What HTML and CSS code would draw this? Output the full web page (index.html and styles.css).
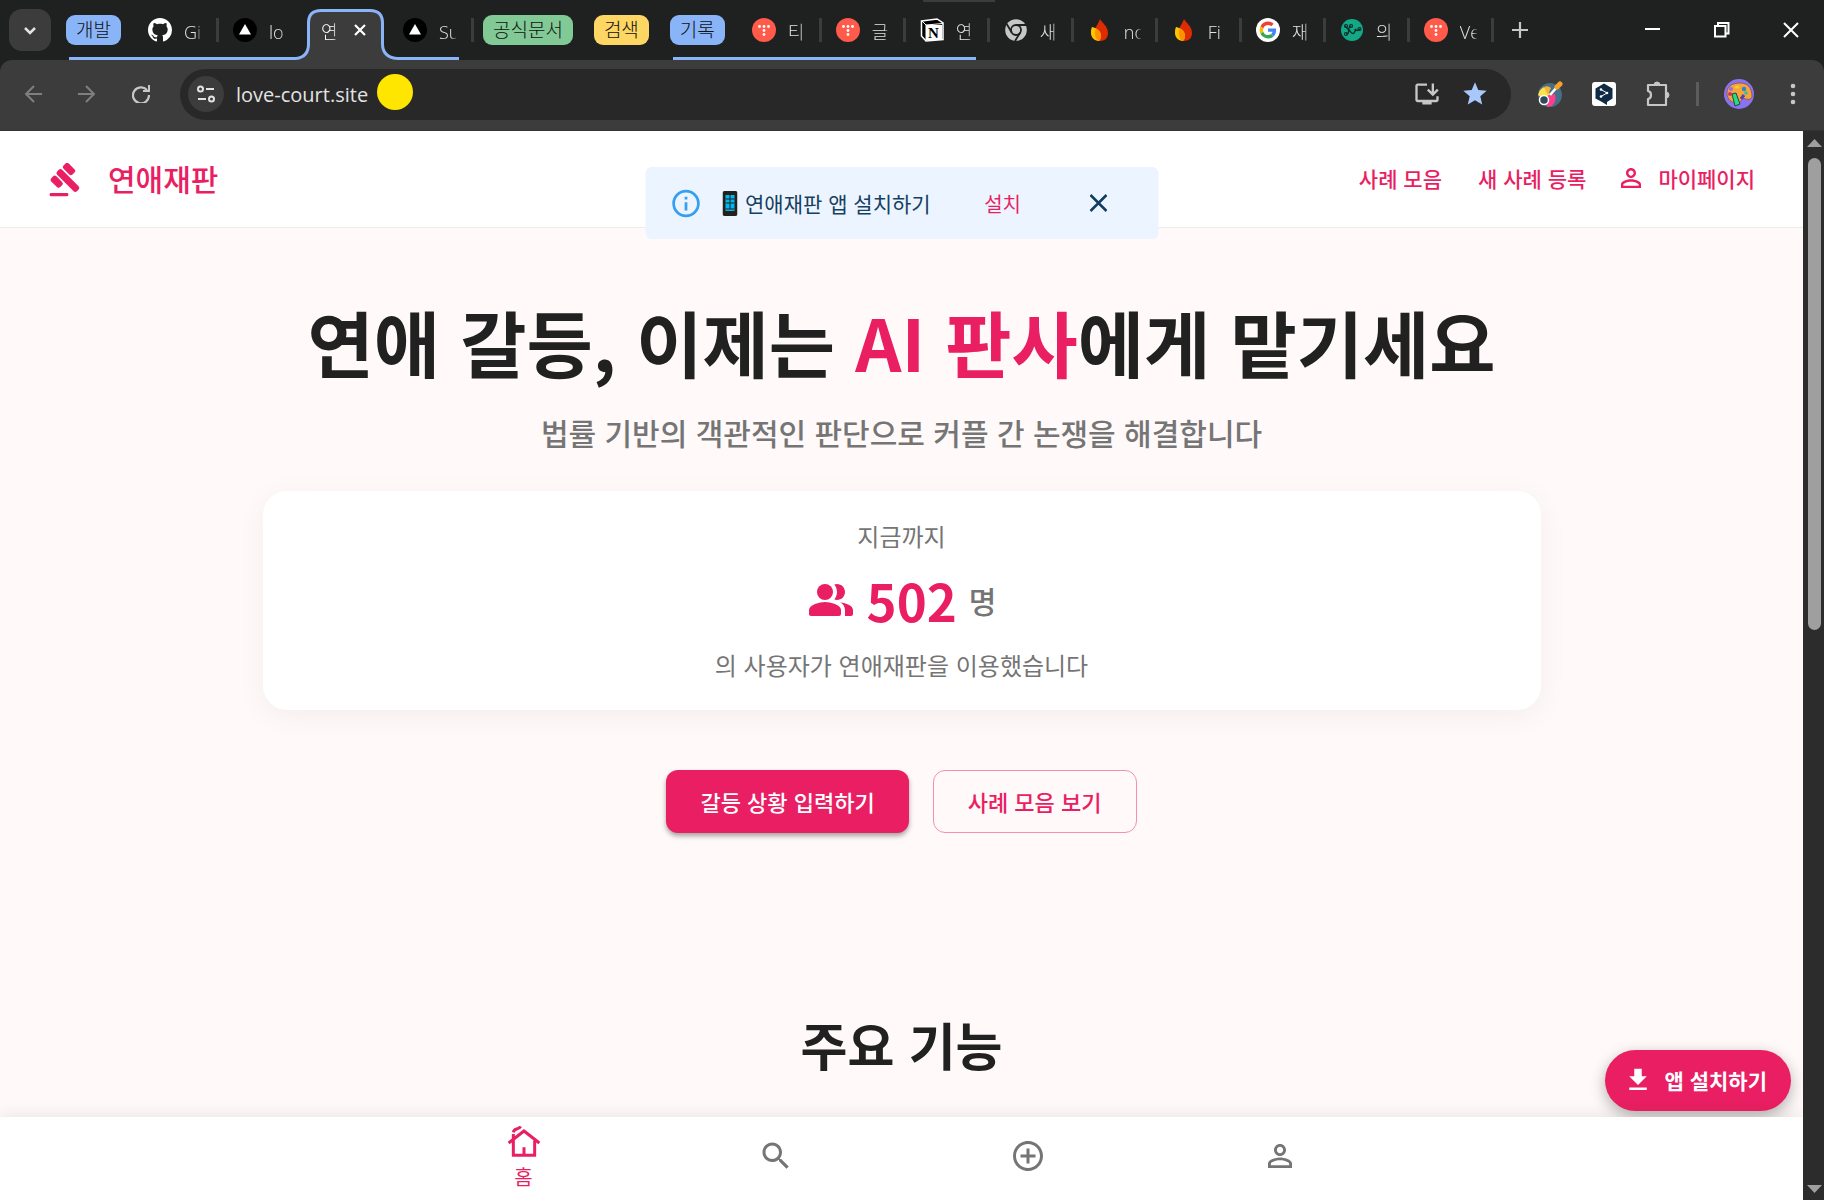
FILE: index.html
```html
<!DOCTYPE html>
<html lang="ko">
<head>
  <meta charset="UTF-8">
  <meta name="viewport" content="width=device-width, initial-scale=1">
  <title>연애재판</title>
  <link rel="stylesheet" href="styles.css">
</head>
<body>
  <!-- 공용 아이콘 -->
  <svg class="sprite" aria-hidden="true">
    <symbol id="triangle" viewBox="0 0 24 24"><circle cx="12" cy="12" r="12" fill="#000"/><path d="M12 6l6 10.500H6z" fill="#fff"/></symbol>
    <symbol id="tistory" viewBox="0 0 24 24">
      <circle cx="12" cy="12" r="12" fill="#ff5a4a"/>
      <g fill="#fff"><circle cx="7.500" cy="8.500" r="1.400"/><circle cx="12" cy="8.500" r="1.400"/><circle cx="16.500" cy="8.500" r="1.400"/><circle cx="12" cy="12.500" r="1.400"/><circle cx="12" cy="16.500" r="1.400"/></g>
    </symbol>
    <symbol id="fire" viewBox="0 0 24 24">
      <path d="M12 1c2 4 8 7 8 14 0 5-3 8-8 8-4 0-6-3-6-7 0-6 4-9 6-15z" fill="#dd2c00"/>
      <path d="M4 9c5 1 9 4 9 9 0 2-1 4-2 5-5 0-8-4-8-8 0-2 0-4 1-6z" fill="#ffc400"/>
      <path d="M8 10.500c3 1.500 5 4 5 7.500 0 2-1 4-2 5-3-1-4-4-4-7 0-2 0-4 1-5.500z" fill="#ff9100"/>
    </symbol>
    <symbol id="person" viewBox="0 0 24 24"><path d="M12 5.900c1.160 0 2.100.940 2.100 2.100s-.940 2.100-2.100 2.100S9.900 9.160 9.900 8s.940-2.100 2.100-2.100m0 9c2.970 0 6.100 1.460 6.100 2.100v1.100H5.900V17c0-.640 3.130-2.100 6.100-2.100M12 4C9.790 4 8 5.790 8 8s1.790 4 4 4 4-1.790 4-4-1.790-4-4-4zm0 9c-2.670 0-8 1.340-8 4v3h16v-3c0-2.660-5.330-4-8-4z"/></symbol>
  </svg>

  <!-- 브라우저 탭 -->
  <div class="tab-strip">
    <div class="top-handle"></div>
    <button class="tab-search" aria-label="탭 검색"><svg width="24" height="24" viewBox="0 0 24 24"><path d="M7 10l5 5 5-5" fill="none" stroke="#e3e3e3" stroke-width="2.500"/></svg></button>
    <div class="tab-group group-dev">
      <button class="chip blue">개발</button>
      <button class="tab"><svg class="favicon" viewBox="0 0 16 16"><path fill="#fff" d="M8 0C3.580 0 0 3.580 0 8c0 3.540 2.290 6.530 5.470 7.590.4.070.55-.17.55-.38 0-.19-.01-.82-.01-1.490-2.010.37-2.530-.49-2.690-.94-.09-.23-.48-.94-.82-1.130-.28-.15-.68-.52-.01-.53.63-.01 1.080.58 1.230.82.72 1.210 1.870.87 2.330.66.07-.52.28-.87.51-1.070-1.780-.2-3.640-.89-3.640-3.950 0-.87.31-1.590.82-2.150-.08-.2-.36-1.020.08-2.120 0 0 .67-.21 2.200.82.64-.18 1.320-.27 2-.27s1.360.09 2 .27c1.530-1.040 2.200-.82 2.200-.82.44 1.100.16 1.920.08 2.120.51.56.82 1.270.82 2.150 0 3.070-1.870 3.750-3.650 3.950.29.25.54.73.54 1.480 0 1.070-.01 1.930-.01 2.200 0 .21.15.46.55.38A8.010 8.010 0 0 0 16 8c0-4.420-3.580-8-8-8z"/></svg><span class="tab-title">Gi</span></button>
      <button class="tab no-line"><svg class="favicon"><use href="#triangle"/></svg><span class="tab-title">lo</span></button>
      <div class="tab active">
        <svg class="active-shape" width="101" height="51" viewBox="0 0 101 51"><path d="M0 51v-2.500Q12.500 48 12.500 35V14Q12.500 1.500 25 1.500H74Q86.500 1.500 86.500 14V35Q86.500 48 101 48.500V51z" fill="#3c3c3c"/><path d="M0 49.500Q12.500 48 12.500 35V14Q12.500 1.500 25 1.500H74Q86.500 1.500 86.500 14V35Q86.500 48 101 49.500" fill="none" stroke="#8ab4f8" stroke-width="3"/></svg>
        <span class="tab-title">연</span>
        <button class="tab-close" aria-label="탭 닫기"><svg width="14" height="14" viewBox="0 0 14 14"><path d="M2 2l10 10M12 2L2 12" stroke="#fff" stroke-width="2.200"/></svg></button>
      </div>
      <button class="tab"><svg class="favicon"><use href="#triangle"/></svg><span class="tab-title">Su</span></button>
    </div>
    <button class="chip green">공식문서</button>
    <button class="chip yellow">검색</button>
    <div class="tab-group group-log">
      <button class="chip blue">기록</button>
      <button class="tab"><svg class="favicon"><use href="#tistory"/></svg><span class="tab-title">티</span></button>
      <button class="tab"><svg class="favicon"><use href="#tistory"/></svg><span class="tab-title">글</span></button>
      <button class="tab"><svg class="favicon" viewBox="0 0 24 24"><path d="M1.500 3L17 1l6 4v16.500L6 23l-4.500-5z" fill="#000" stroke="#fff" stroke-width="1.500"/><path d="M2 3l4 4 17-1.500M6 7v16" fill="none" stroke="#fff"/><rect x="6" y="7" width="16" height="15" fill="#fff"/><text x="13.500" y="19.500" text-anchor="middle" class="notion-n">N</text></svg><span class="tab-title">연</span></button>
    </div>
    <button class="tab"><svg class="favicon" viewBox="0 0 24 24"><circle cx="12" cy="12" r="10.800" fill="#c7c7c7"/><circle cx="12" cy="12" r="5" fill="none" stroke="#1f2120" stroke-width="1.800"/><path d="M12 7h10M16.300 14.500L11 23M7.700 14.500L2.700 6" stroke="#1f2120" stroke-width="1.800"/></svg><span class="tab-title">새</span></button>
    <button class="tab"><svg class="favicon"><use href="#fire"/></svg><span class="tab-title">no</span></button>
    <button class="tab"><svg class="favicon"><use href="#fire"/></svg><span class="tab-title">Fi</span></button>
    <button class="tab"><svg class="favicon" viewBox="-16 -16 80 80"><circle cx="24" cy="24" r="40" fill="#fff"/><g transform="translate(-4 -4) scale(1.170)"><path fill="#ea4335" d="M24 9.500c3.540 0 6.710 1.220 9.210 3.600l6.850-6.850C35.900 2.380 30.470 0 24 0 14.620 0 6.510 5.380 2.560 13.220l7.980 6.190C12.430 13.720 17.740 9.500 24 9.500z"/><path fill="#4285f4" d="M46.980 24.550c0-1.570-.15-3.090-.38-4.550H24v9.020h12.940c-.58 2.960-2.260 5.480-4.780 7.180l7.730 6c4.510-4.180 7.090-10.360 7.090-17.650z"/><path fill="#fbbc05" d="M10.530 28.590c-.48-1.450-.76-2.990-.76-4.590s.27-3.140.76-4.590l-7.980-6.190C.92 16.460 0 20.120 0 24c0 3.880.92 7.540 2.560 10.780l7.970-6.190z"/><path fill="#34a853" d="M24 48c6.480 0 11.930-2.130 15.890-5.810l-7.730-6c-2.150 1.450-4.920 2.300-8.160 2.300-6.260 0-11.570-4.220-13.470-9.910l-7.980 6.190C6.510 42.620 14.620 48 24 48z"/></g></svg><span class="tab-title">재</span></button>
    <button class="tab"><svg class="favicon" viewBox="0 0 24 24"><circle cx="12" cy="12" r="11" fill="#14a986"/><path d="M6 16q4 0 2-6 4 7 6 5t1-4q2 3 5 0M5 8l3 3 3-3" fill="none" stroke="#0b2d2a" stroke-width="1.400"/><g fill="none" stroke="#0b2d2a" stroke-width="1.200"><circle cx="6" cy="8" r="1.500"/><circle cx="6" cy="16" r="1.500"/><circle cx="11" cy="8" r="1.500"/><circle cx="19.500" cy="11" r="1.500"/></g></svg><span class="tab-title">의</span></button>
    <button class="tab"><svg class="favicon"><use href="#tistory"/></svg><span class="tab-title">Ve</span></button>
    <button class="new-tab" aria-label="새 탭"><svg width="16" height="16" viewBox="0 0 16 16"><path d="M8 0v16M0 8h16" stroke="#c7c7c7" stroke-width="2.200"/></svg></button>
    <div class="window-buttons">
      <button aria-label="최소화"><svg width="16" height="16" viewBox="0 0 16 16"><path d="M0 7h15" stroke="#fff" stroke-width="2"/></svg></button>
      <button aria-label="이전 크기로"><svg width="16" height="16" viewBox="0 0 16 16"><path d="M1 4h10.500v10.500H1zM4 4V1h10.500v10.500h-3" fill="none" stroke="#fff" stroke-width="2"/></svg></button>
      <button aria-label="닫기"><svg width="16" height="16" viewBox="0 0 16 16"><path d="M1 1l14 14M15 1L1 15" stroke="#fff" stroke-width="2"/></svg></button>
    </div>
  </div>

  <!-- 주소창 -->
  <div class="toolbar">
    <button class="tool" aria-label="뒤로"><svg width="18" height="18" viewBox="0 0 18 18"><path d="M18 9H2M10 1L2 9l8 8" fill="none" stroke="#7f7f7f" stroke-width="2"/></svg></button>
    <button class="tool" aria-label="앞으로"><svg width="18" height="18" viewBox="0 0 18 18"><path d="M0 9h16M8 1l8 8-8 8" fill="none" stroke="#7f7f7f" stroke-width="2"/></svg></button>
    <button class="tool" aria-label="새로고침"><svg width="18" height="18" viewBox="0 0 18 18"><path d="M15 5A8 8 0 1 0 17 10" fill="none" stroke="#c7c7c7" stroke-width="2.200"/><path d="M18 0v7h-7V5h5V0z" fill="#c7c7c7"/></svg></button>
    <div class="address">
      <button class="site-info" aria-label="사이트 정보"><svg width="18" height="18" viewBox="0 0 18 18"><g fill="none" stroke="#e3e3e3" stroke-width="2"><circle cx="3.500" cy="4" r="2.500"/><path d="M9 4h8M1 14h8"/><circle cx="14.500" cy="14" r="2.500"/></g></svg></button>
      <input class="url" type="text" value="love-court.site" aria-label="주소">
      <span class="yellow-dot"></span>
      <button class="address-icon push" aria-label="앱 설치"><svg width="28" height="28" viewBox="0 0 24 24"><path fill="#c7c7c7" d="M20 17H4V5h8V3H4c-1.100 0-2 .9-2 2v12c0 1.100.9 2 2 2h4v2h8v-2h4c1.100 0 2-.9 2-2v-3h-2v3zM17 14l5-5-1.410-1.410L18 10.170V3h-2v7.170l-2.590-2.580L12 9l5 5z"/></svg></button>
      <button class="address-icon" aria-label="북마크"><svg width="28" height="28" viewBox="0 0 24 24"><path fill="#a8c7fa" d="M12 17.270L18.180 21l-1.640-7.030L22 9.240l-7.190-.61L12 2 9.190 8.630 2 9.240l5.460 4.730L5.820 21z"/></svg></button>
    </div>
    <div class="extensions">
      <button aria-label="색상 추출"><svg width="26" height="26" viewBox="0 0 26 26"><circle cx="13" cy="14" r="12" fill="#456f86"/><path d="M1 14a12 12 0 0 1 6-8l6 7-6 6z" fill="#ffe04a"/><path d="M7 6q4-2 7 1l-3 7z" fill="#f9b233"/><path d="M10 15l8-2q2 7-3 12l-5 1z" fill="#ff3f8e"/><circle cx="7" cy="19" r="4.500" fill="#2d4a5c" stroke="#fff" stroke-width="1.500"/><path d="M13 14l7-8" stroke="#fff" stroke-width="2.500"/><path d="M20 6l3-3" stroke="#f9a22b" stroke-width="5" stroke-linecap="round"/></svg></button>
      <button aria-label="번역"><svg width="26" height="26" viewBox="0 0 26 26"><rect x="1" y="1" width="24" height="24" rx="3" fill="#fff"/><path d="M13 2.500l8.500 5v10L16 21v3l-5-3-6.500-3.500v-10z" fill="#0f2b46"/><path d="M10 8.500l6 3.500-6 3.500" fill="none" stroke="#fff" stroke-width="1"/><g fill="#fff"><circle cx="10" cy="8.500" r="1.300"/><circle cx="16" cy="12" r="1.300"/><circle cx="10" cy="15.500" r="1.300"/></g></svg></button>
      <button aria-label="확장 프로그램"><svg width="26" height="26" viewBox="0 0 26 26"><path d="M3 4h18V24H3v-6q3-.5 3-4t-3-4z" fill="none" stroke="#c7c7c7" stroke-width="2.200" stroke-linejoin="round"/><path d="M9 4a3 3 0 0 1 6 0zM21 11a3 3 0 0 1 0 6z" fill="#c7c7c7" stroke="#c7c7c7"/></svg></button>
      <span class="divider"></span>
      <button aria-label="프로필"><svg width="30" height="30" viewBox="0 0 30 30"><circle cx="15" cy="15" r="15" fill="#8b72f2"/><path d="M3 14C3 7 9 4 16 4c8 0 12 5 12 14-2 4-6 2-9 1-3 4-5 7-9 5-4-2-7-5-7-10z" fill="#f9a33c" stroke="#6d4520" stroke-width=".6"/><circle cx="7" cy="10" r="2" fill="#8b72f2"/><ellipse cx="13" cy="8" rx="2.500" ry="1.500" fill="#e7d321"/><circle cx="20" cy="10" r="2.200" fill="#2389cf"/><circle cx="22" cy="14" r="1.800" fill="#22c4a6"/><circle cx="6" cy="15" r="2" fill="#d53461"/><path d="M8 15l4-1 4 11-5 2z" fill="#29d889" stroke="#174b42"/><path d="M17 20l3-4" stroke="#5940b0" stroke-width="3"/></svg></button>
      <button class="menu" aria-label="메뉴"><svg width="6" height="22" viewBox="0 0 6 22"><g fill="#c7c7c7"><circle cx="3" cy="3" r="2.300"/><circle cx="3" cy="11" r="2.300"/><circle cx="3" cy="19" r="2.300"/></g></svg></button>
    </div>
  </div>

  <div class="viewport">
    <div class="page">
      <header class="header">
        <a class="brand" href="#">
          <svg width="32" height="34" viewBox="0 0 96 102"><g fill="#e91e63"><rect x="2" y="90" width="56" height="10" rx="4"/><rect x="15" y="42" width="84" height="21" rx="7" transform="rotate(45 57 52)"/><rect x="41" y="7" width="38" height="22" rx="7" transform="rotate(45 60 18)"/><rect x="4" y="45" width="38" height="22" rx="7" transform="rotate(45 23 56)"/></g></svg>
          <span>연애재판</span>
        </a>
        <nav class="nav">
          <a href="#">사례 모음</a>
          <a href="#">새 사례 등록</a>
          <a class="mypage" href="#"><svg class="icon-30"><use href="#person"/></svg>마이페이지</a>
        </nav>
      </header>

      <!-- 앱 설치 안내 -->
      <div class="install-banner">
        <svg width="33" height="33" viewBox="0 0 24 24"><path fill="#359ff4" d="M11 7h2v2h-2zM11 11h2v6h-2zM12 2a10 10 0 1 0 0 20 10 10 0 0 0 0-20zm0 18a8 8 0 1 1 0-16 8 8 0 0 1 0 16z"/></svg>
        <p><svg width="15" height="25" viewBox="0 0 15 25"><rect width="15" height="25" rx="2" fill="#24201e"/><rect x="3" y="4" width="9" height="16" fill="#00b8f0"/><path d="M3 8h9M3 12h9M3 18h9M7.500 4v14" stroke="#24201e"/></svg>연애재판 앱 설치하기</p>
        <button class="install-link">설치</button>
        <button class="banner-close" aria-label="닫기"><svg width="18" height="18" viewBox="0 0 18 18"><path d="M1 1l16 16M17 1L1 17" stroke="#0f3c5f" stroke-width="2.500"/></svg></button>
      </div>

      <main>
        <section class="hero">
          <h1>연애 갈등, 이제는 <span>AI 판사</span>에게 맡기세요</h1>
          <p class="subtitle">법률 기반의 객관적인 판단으로 커플 간 논쟁을 해결합니다</p>
          <div class="stats-card">
            <p>지금까지</p>
            <div class="count">
              <svg width="48" height="48" viewBox="0 0 24 24"><g fill="#e91e63"><circle cx="9" cy="8" r="4"/><path d="M9 13c-2.670 0-8 1.340-8 4v2c0 .55.45 1 1 1h14c.55 0 1-.45 1-1v-2c0-2.660-5.330-4-8-4z"/><path d="M15 12c2.210 0 4-1.790 4-4s-1.790-4-4-4c-.47 0-.91.1-1.330.24C14.500 5.270 15 6.580 15 8s-.5 2.730-1.330 3.760c.42.14.86.24 1.330.24zM16.670 13.130C18.040 14.060 19 15.320 19 17v3h3c.55 0 1-.45 1-1v-2c0-2.180-3.570-3.470-6.330-3.870z"/></g></svg>
              <strong>502</strong>
              <span>명</span>
            </div>
            <p>의 사용자가 연애재판을 이용했습니다</p>
          </div>
          <div class="actions">
            <button class="btn primary">갈등 상황 입력하기</button>
            <button class="btn outline">사례 모음 보기</button>
          </div>
        </section>
        <section class="features">
          <h2>주요 기능</h2>
        </section>
      </main>

      <button class="fab"><svg width="30" height="30" viewBox="0 0 24 24"><path fill="#fff" d="M19 9h-4V3H9v6H5l7 7 7-7zM5 18v2h14v-2H5z"/></svg>앱 설치하기</button>

      <nav class="bottom-nav">
        <a class="current" href="#"><svg width="32" height="32" viewBox="0 0 96 96"><path d="M2 51L48 15l46 36M16 24v64h64V44M48 64v24M16 19q2-8 10-10t12-8" fill="none" stroke="#e91e63" stroke-width="9"/></svg>홈</a>
        <a href="#" aria-label="검색"><svg class="icon-36" viewBox="0 0 24 24"><path d="M15.500 14h-.79l-.28-.27C15.410 12.590 16 11.110 16 9.500 16 5.910 13.090 3 9.500 3S3 5.910 3 9.500 5.910 16 9.500 16c1.610 0 3.090-.59 4.230-1.570l.27.28v.79l5 4.990L20.490 19l-4.990-5zm-6 0C7.010 14 5 11.990 5 9.500S7.010 5 9.500 5 14 7.010 14 9.500 11.990 14 9.500 14z"/></svg></a>
        <a href="#" aria-label="등록"><svg class="icon-36" viewBox="0 0 24 24"><path d="M13 7h-2v4H7v2h4v4h2v-4h4v-2h-4V7zm-1-5C6.480 2 2 6.480 2 12s4.480 10 10 10 10-4.480 10-10S17.520 2 12 2zm0 18c-4.410 0-8-3.590-8-8s3.590-8 8-8 8 3.590 8 8-3.590 8-8 8z"/></svg></a>
        <a href="#" aria-label="마이페이지"><svg class="icon-36"><use href="#person"/></svg></a>
      </nav>
    </div>

    <div class="scrollbar">
      <svg width="15" height="8" viewBox="0 0 15 8"><path d="M0 8l7.500-8L15 8z" fill="#9f9f9f"/></svg>
      <div class="track"><div class="thumb"></div></div>
      <svg width="15" height="8" viewBox="0 0 15 8"><path d="M0 0l7.500 8L15 0z" fill="#9f9f9f"/></svg>
    </div>
  </div>
</body>
</html>
```
FILE: styles.css
```css
* {
  margin: 0;
  padding: 0;
  box-sizing: border-box;
}

body {
  font-family: 'Noto Sans CJK KR', sans-serif;
  background: #1f2120;
  display: flex;
  flex-direction: column;
  height: 100vh;
  overflow: hidden;
}

button {
  font-family: inherit;
  border: none;
  background: none;
  cursor: pointer;
}

a {
  color: inherit;
  text-decoration: none;
}

svg {
  flex-shrink: 0;
}

.sprite {
  position: absolute;
  width: 0;
  height: 0;
}

/* 탭 */
.tab-strip {
  position: relative;
  display: flex;
  align-items: center;
  height: 60px;
  flex-shrink: 0;
  padding-left: 9px;
}

.top-handle {
  position: absolute;
  left: 923px;
  top: 0;
  width: 72px;
  height: 2px;
  background: #3c3c3c;
}

.tab-search {
  display: flex;
  align-items: center;
  justify-content: center;
  width: 42px;
  height: 42px;
  border-radius: 13px;
  background: #3c3c3c;
  margin-right: 15px;
}

.tab-group {
  position: relative;
  display: flex;
  align-items: center;
  height: 60px;
}

.tab-group::after {
  content: '';
  position: absolute;
  left: 3px;
  right: 15px;
  bottom: 0;
  height: 3px;
  background: #8ab4f8;
}

.group-log::after {
  right: 14px;
}

.chip {
  height: 30px;
  padding: 0 10px 3px;
  border-radius: 9px;
  font-size: 19px;
  font-weight: 300;
  line-height: 27px;
  color: #111;
  margin-right: 21px;
  white-space: nowrap;
}

.tab-group .chip {
  margin-right: 13px;
}

.group-dev {
  margin-right: 9px;
}

.blue {
  background: #8ab4f8;
}

.green {
  background: #81c995;
}

.yellow {
  background: #fdd663;
}

.tab {
  position: relative;
  display: flex;
  align-items: center;
  width: 84px;
  height: 24px;
  padding-left: 14px;
  border-right: 3px solid #3c3c3c;
  flex-shrink: 0;
}

.group-dev .tab {
  width: 85px;
}

.tab.no-line {
  border-color: transparent;
}

.favicon {
  width: 24px;
  height: 24px;
  margin-right: 12px;
}

.notion-n {
  font: bold 15px 'Liberation Serif', serif;
}

.tab-title {
  width: 17px;
  padding-top: 3px;
  overflow: hidden;
  white-space: nowrap;
  text-align: left;
  font-family: 'Open Sans', 'Noto Sans CJK KR', sans-serif;
  font-size: 18px;
  font-weight: 300;
  line-height: 28px;
  color: #e3e3e3;
  mask-image: linear-gradient(to right, #000 70%, rgba(0, 0, 0, 0.2));
}

.tab.active {
  height: 60px;
  padding-left: 17px;
  border: none;
  z-index: 1;
}

.active .tab-title {
  position: relative;
  color: #fff;
}

.active-shape {
  position: absolute;
  left: -8px;
  bottom: 0;
}

.tab-close {
  position: relative;
  display: flex;
  margin-left: 15px;
}

.new-tab {
  display: flex;
  margin-left: 18px;
}

.window-buttons {
  display: flex;
  gap: 53px;
  margin-left: auto;
  padding-right: 25px;
}

.window-buttons button {
  display: flex;
}

/* 주소창 */
.toolbar {
  display: flex;
  align-items: center;
  height: 71px;
  flex-shrink: 0;
  padding: 0 28px 2px 24px;
  background: #3c3c3c;
  border-bottom: 1px solid #333;
  border-radius: 12px 12px 0 0;
}

.tool {
  display: flex;
  margin-right: 36px;
}

.tool:nth-child(3) {
  margin-right: 30px;
}

.address {
  display: flex;
  align-items: center;
  flex: 1;
  height: 51px;
  padding: 0 22px 0 8px;
  border-radius: 26px;
  background: #282828;
}

.site-info {
  display: flex;
  align-items: center;
  justify-content: center;
  width: 36px;
  height: 36px;
  border-radius: 50%;
  background: #3c3c3c;
}

.url {
  width: 141px;
  margin-left: 12px;
  border: none;
  outline: none;
  background: none;
  color: #e3e3e3;
  font-family: 'Open Sans', sans-serif;
  font-size: 20px;
}

.yellow-dot {
  width: 36px;
  height: 36px;
  margin-bottom: 5px;
  border-radius: 50%;
  background: #ffe600;
}

.address-icon {
  display: flex;
  margin-left: 20px;
}

.push {
  margin-left: auto;
}

.extensions {
  display: flex;
  align-items: center;
  gap: 28px;
  margin-left: 26px;
}

.extensions button {
  display: flex;
}

.divider {
  width: 3px;
  height: 24px;
  margin: 0 -3px;
  background: #5c5c5c;
}

.menu {
  margin-left: 8px;
}

/* 페이지 */
.viewport {
  display: flex;
  flex: 1;
  min-height: 0;
}

.page {
  position: relative;
  display: flex;
  flex-direction: column;
  flex: 1;
  background: #fff9f9;
  overflow: hidden;
}

.header {
  display: flex;
  align-items: center;
  justify-content: space-between;
  height: 97px;
  flex-shrink: 0;
  padding: 0 48px 2px 49px;
  background: #fff;
  border-bottom: 1px solid #ececec;
  color: #e91e63;
}

.brand {
  display: flex;
  align-items: center;
  gap: 27px;
  font-size: 30px;
  font-weight: 500;
}

.brand svg {
  margin-top: 4px;
}

.nav {
  display: flex;
  align-items: center;
  gap: 36px;
  font-size: 21px;
  font-weight: 500;
}

.mypage {
  display: flex;
  align-items: center;
  gap: 12px;
  margin-left: -6px;
}

.icon-30 {
  width: 30px;
  height: 30px;
  fill: #e91e63;
}

.icon-36 {
  width: 36px;
  height: 36px;
  fill: #757575;
}

.install-banner {
  position: absolute;
  top: 36px;
  left: 50%;
  transform: translateX(-50%);
  display: flex;
  align-items: center;
  width: 513px;
  height: 72px;
  padding: 0 51px 0 24px;
  border-radius: 6px;
  background: #ecf5ff;
  color: #16405f;
}

.install-banner p {
  display: flex;
  align-items: center;
  gap: 8px;
  margin-left: 20px;
  font-size: 21px;
}

.install-link {
  margin-left: auto;
  font-size: 20px;
  color: #e91e63;
}

.banner-close {
  display: flex;
  margin-left: 68px;
}

main {
  flex: 1;
  min-height: 0;
  text-align: center;
}

.hero {
  max-width: 1278px;
  margin: 0 auto;
  padding-top: 70px;
}

.hero h1 {
  font-size: 72px;
  font-weight: 700;
  line-height: 86px;
  color: #212121;
}

.hero h1 span {
  color: #e91e63;
}

.subtitle {
  margin-top: 28px;
  font-size: 30px;
  font-weight: 500;
  line-height: 40px;
  color: #757575;
}

.stats-card {
  display: flex;
  flex-direction: column;
  gap: 16px;
  margin-top: 39px;
  padding: 27px;
  border-radius: 24px;
  background: #fff;
  box-shadow: 0 6px 30px rgba(0, 0, 0, 0.05);
  color: #757575;
}

.stats-card p {
  font-size: 24px;
  line-height: 36px;
}

.count {
  display: flex;
  align-items: center;
  justify-content: center;
  gap: 12px;
  height: 61px;
  padding-bottom: 1px;
}

.count strong {
  font-size: 51px;
  line-height: 60px;
  color: #e91e63;
}

.count span {
  font-size: 30px;
  font-weight: 500;
}

.actions {
  display: flex;
  justify-content: center;
  gap: 24px;
  margin-top: 60px;
}

.btn {
  height: 63px;
  padding: 0 34px 2px;
  border-radius: 12px;
  font-size: 22px;
  font-weight: 500;
}

.primary {
  background: #e91e63;
  color: #fff;
  box-shadow: 0 3px 5px rgba(0, 0, 0, 0.35);
}

.outline {
  border: 1px solid #f48fb1;
  color: #e91e63;
}

.features {
  margin-top: 180px;
}

.features h2 {
  font-size: 51px;
  line-height: 62px;
  color: #212121;
}

.fab {
  position: absolute;
  right: 12px;
  bottom: 89px;
  display: flex;
  align-items: center;
  gap: 12px;
  height: 61px;
  padding: 0 24px 2px 18px;
  border-radius: 31px;
  background: #e91e63;
  color: #fff;
  font-size: 21px;
  font-weight: 700;
  box-shadow: 0 5px 15px rgba(0, 0, 0, 0.3);
}

.bottom-nav {
  position: relative;
  display: flex;
  justify-content: center;
  height: 83px;
  flex-shrink: 0;
  background: #fff;
  box-shadow: 0 -3px 15px rgba(0, 0, 0, 0.08);
}

.bottom-nav a {
  display: flex;
  flex-direction: column;
  align-items: center;
  justify-content: center;
  width: 252px;
  padding-bottom: 6px;
  font-size: 20px;
  line-height: 32px;
}

.bottom-nav .current {
  gap: 3px;
  padding: 2px 0 0;
  color: #e91e63;
}

/* 스크롤바 */
.scrollbar {
  display: flex;
  flex-direction: column;
  align-items: center;
  width: 21px;
  padding: 8px 0 7px 1px;
  background: #2c2c2c;
}

.track {
  flex: 1;
  padding: 11px 0;
}

.thumb {
  width: 13px;
  height: 46.5%;
  border-radius: 7px;
  background: #9f9f9f;
}
```
